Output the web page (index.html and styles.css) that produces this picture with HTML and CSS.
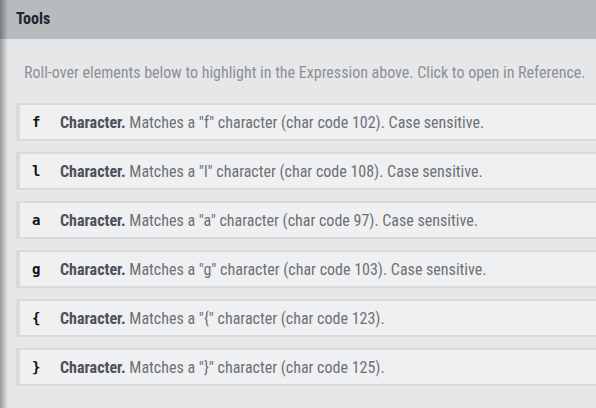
FILE: index.html
```html
<!DOCTYPE html>
<html>
<head>
<meta charset="utf-8">
<link rel="stylesheet" href="styles.css">
</head>
<body>
<div class="panel">
  <div class="header">Tools</div>
  <div class="content">
    <p class="tip">Roll-over elements below to highlight in the Expression above. Click to open in Reference.</p>
    <div class="list">
      <div class="row"><span class="glyph">f</span><span class="desc"><b>Character.</b> Matches a "f" character (char code 102). Case sensitive.</span></div>
      <div class="row"><span class="glyph">l</span><span class="desc"><b>Character.</b> Matches a "l" character (char code 108). Case sensitive.</span></div>
      <div class="row"><span class="glyph">a</span><span class="desc"><b>Character.</b> Matches a "a" character (char code 97). Case sensitive.</span></div>
      <div class="row"><span class="glyph">g</span><span class="desc"><b>Character.</b> Matches a "g" character (char code 103). Case sensitive.</span></div>
      <div class="row"><span class="glyph">{</span><span class="desc"><b>Character.</b> Matches a "{" character (char code 123).</span></div>
      <div class="row"><span class="glyph">}</span><span class="desc"><b>Character.</b> Matches a "}" character (char code 125).</span></div>
    </div>
  </div>
</div>
</body>
</html>
```

FILE: styles.css
```css
html, body {
  margin: 0;
  padding: 0;
  width: 596px;
  height: 408px;
  overflow: hidden;
}
body {
  background: #e6e7e9;
  font-family: Roboto, "Liberation Sans", sans-serif;
  font-stretch: 87.5%;
}
.panel {
  position: relative;
  height: 408px;
  background: #e6e7e9;
}
.panel::before {
  content: "";
  position: absolute;
  left: 0;
  top: 0;
  bottom: 0;
  width: 8px;
  background: linear-gradient(to right, rgba(0,0,0,0.35), rgba(0,0,0,0));
}
.header {
  height: 39px;
  line-height: 38px;
  background: #b7bbbe;
  padding-left: 16px;
  font-weight: 700;
  font-size: 16px;
  color: #1d2430;
}
.content {
  padding: 0 0 0 16px;
}
.tip {
  margin: 0;
  padding: 24px 0 0 8px;
  font-size: 16px;
  line-height: 20px;
  color: #8c9095;
}
.list {
  display: flex;
  flex-direction: column;
  gap: 11px;
  margin-top: 20px;
}
.row {
  display: flex;
  align-items: center;
  height: 34px;
  background: #eff0f2;
  border: 2px solid #d9dadc;
  border-left-width: 4px;
  border-right: none;
}
.glyph {
  width: 40px;
  padding-left: 12px;
  box-sizing: border-box;
  font-family: "DejaVu Sans Mono", monospace;
  font-stretch: normal;
  font-weight: 700;
  font-size: 14px;
  color: #111;
}
.desc {
  font-size: 16px;
  color: #6d7176;
}
.desc b {
  color: #4d5258;
}
```
